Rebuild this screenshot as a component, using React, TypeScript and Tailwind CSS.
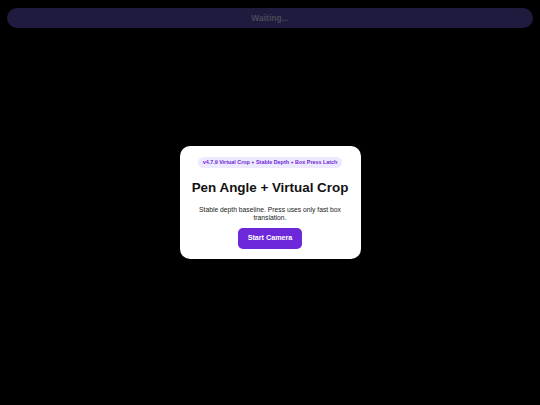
export default function App() {
  return (
    <div
      className="relative w-[540px] h-[405px] bg-black flex items-center justify-center overflow-hidden"
      style={{ fontFamily: '"Liberation Sans", Arial, sans-serif' }}
    >
      {/* status pill pinned over the top */}
      <div className="absolute top-[8px] left-[7px] right-[7px] h-[20px] rounded-full bg-[#1e1b3f] flex items-center justify-center">
        <span className="text-[8.5px] font-bold text-[#4a4858]">Waiting...</span>
      </div>

      <div className="w-[181px] bg-white rounded-[10px] px-[17px] pt-[11px] pb-[10px] flex flex-col items-center text-center">
        <div className="h-[11px] px-[5px] rounded-full bg-[#ede9fe] flex items-center">
          <span className="text-[5.4px] font-bold text-[#6d28d9] whitespace-nowrap leading-none">
            v4.7.9 Virtual Crop + Stable Depth + Box Press Latch
          </span>
        </div>
        <h1 className="mt-[12px] text-[13.4px] font-bold text-[#111] leading-[16px] whitespace-nowrap">
          Pen Angle + Virtual Crop
        </h1>
        <p className="mt-[10px] text-[6.75px] text-[#222] leading-[7.5px]">
          Stable depth baseline. Press uses only fast box translation.
        </p>
        <button className="mt-[7px] h-[21px] w-[64px] rounded-[5px] bg-[#6d28d9] text-white text-[7.2px] font-bold">
          Start Camera
        </button>
      </div>
    </div>
  );
}
